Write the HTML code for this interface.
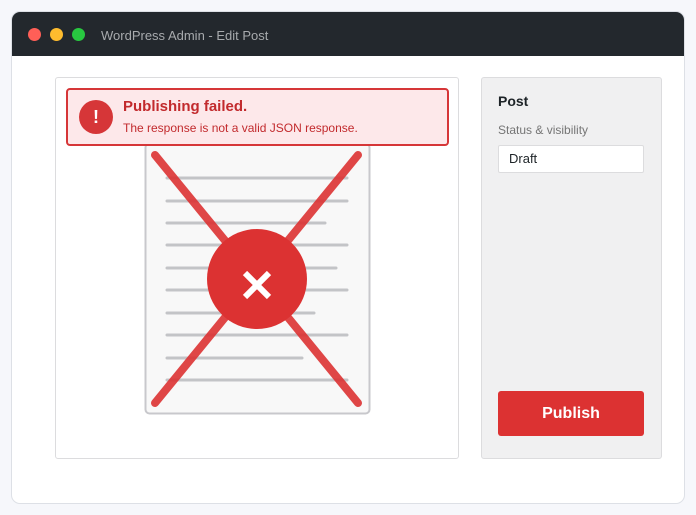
<!DOCTYPE html><html><head><style>
body{margin:0;width:696px;height:515px;background:#f6f7fb;font-family:"Liberation Sans",sans-serif;position:relative;overflow:hidden}
.win{position:absolute;left:11px;top:11px;width:672px;height:491px;background:#fff;border:1px solid #dde0e6;border-radius:9px;overflow:hidden}
.tb{height:44px;background:#23282d;position:relative}
.d{position:absolute;top:16px;width:13px;height:13px;border-radius:50%}
.tt{position:absolute;left:89px;top:16px;font-size:13px;color:#a7aaad}
.lp{position:absolute;left:55px;top:77px;width:402px;height:380px;border:1px solid #dcdcde;border-radius:3px;background:#fff}
.al{position:absolute;left:66px;top:88px;width:379px;height:54px;border:2px solid #d63638;border-radius:4px;background:#fde8ea}
.ic{position:absolute;left:11px;top:10px;width:34px;height:34px;border-radius:50%;background:#d63638;color:#fff;font-weight:bold;font-size:18px;text-align:center;line-height:34px}
.h{position:absolute;left:55px;top:8px;font-weight:bold;font-size:15px;color:#c22a2d}
.m{position:absolute;left:55px;top:31px;font-size:12px;color:#c22a2d}
.rp{position:absolute;left:481px;top:77px;width:179px;height:380px;border:1px solid #dcdcde;border-radius:3px;background:#f0f0f1}
.btn{position:absolute;left:498px;top:391px;width:146px;height:45px;background:#dc3232;border-radius:3px;color:#fff;font-weight:bold;font-size:16px;text-align:center;line-height:45px}
</style></head><body>
<div class="win"><div class="tb">
<div class="d" style="left:16px;background:#ff5f57"></div><div class="d" style="left:38px;background:#febc2e"></div><div class="d" style="left:60px;background:#28c840"></div>
<div class="tt">WordPress Admin - Edit Post</div></div></div>
<div class="lp"></div>
<svg style="position:absolute;left:0;top:0" width="696" height="515">
<rect x="145.5" y="143.5" width="224" height="270" rx="4" fill="#f8f8f8" stroke="#c8c8cc" stroke-width="2"/>
<g stroke="#c3c4c7" stroke-width="3" stroke-linecap="round">
<line x1="167" y1="178" x2="347" y2="178"/><line x1="167" y1="201" x2="347" y2="201"/><line x1="167" y1="223" x2="325" y2="223"/><line x1="167" y1="245" x2="347" y2="245"/><line x1="167" y1="268" x2="336" y2="268"/><line x1="167" y1="290" x2="347" y2="290"/><line x1="167" y1="313" x2="314" y2="313"/><line x1="167" y1="335" x2="347" y2="335"/><line x1="167" y1="358" x2="302" y2="358"/><line x1="167" y1="380" x2="347" y2="380"/></g>
<g stroke="#dc3232" stroke-opacity=".9" stroke-width="8" stroke-linecap="round"><line x1="155" y1="155" x2="358" y2="403"/><line x1="358" y1="155" x2="155" y2="403"/></g>
<circle cx="257" cy="279" r="50" fill="#dc3232"/>
<g stroke="#fff" stroke-width="6"><line x1="245" y1="273" x2="269" y2="297"/><line x1="269" y1="273" x2="245" y2="297"/></g>
</svg>
<div class="al"><div class="ic">!</div><div class="h">Publishing failed.</div><div class="m">The response is not a valid JSON response.</div></div>
<div class="rp"></div>
<div style="position:absolute;left:498px;top:93px;font-weight:bold;font-size:14px;color:#1d2327">Post</div>
<div style="position:absolute;left:498px;top:123px;font-size:12px;color:#757575">Status &amp; visibility</div>
<div style="position:absolute;left:498px;top:145px;width:144px;height:26px;background:#fff;border:1px solid #dcdcde;border-radius:2px;font-size:13px;line-height:26px;text-indent:10px;color:#1d2327">Draft</div>
<div class="btn">Publish</div>
</body></html>
